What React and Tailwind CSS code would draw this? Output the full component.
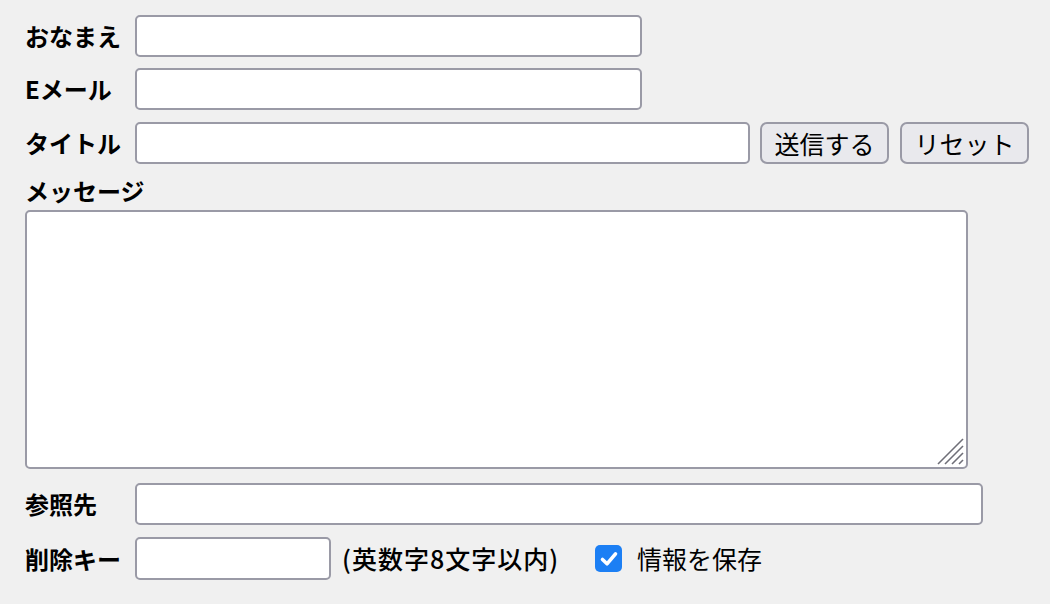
import React from "react";

const inputCls =
  "h-[42px] bg-white border-2 border-[#9a9aa6] rounded-[5px] outline-none px-2 text-[24px]";
const btnCls =
  "h-[42px] w-[129px] bg-[#e9e9ed] border-2 border-[#9a9aa6] rounded-[7px] text-[25px] text-black leading-none flex items-center justify-center";
const labelCls = "w-[110px] shrink-0 text-[24px] font-bold text-black leading-none";

export default function App() {
  return (
    <div className="min-h-[604px] w-[1050px] bg-[#f0f0f0] font-['Noto_Sans_CJK_JP','Noto_Sans_CJK_SC',sans-serif] text-black pl-[25px] pt-[15px]">
      <div className="flex items-center h-[42px]">
        <span className={labelCls}>おなまえ</span>
        <input className={inputCls + " w-[507px]"} />
      </div>
      <div className="flex items-center h-[42px] mt-[11px]">
        <span className={labelCls}>Eメール</span>
        <input className={inputCls + " w-[507px]"} />
      </div>
      <div className="flex items-center h-[42px] mt-[12px]">
        <span className={labelCls}>タイトル</span>
        <input className={inputCls + " w-[615px]"} />
        <button className={btnCls + " ml-[10px]"}>送信する</button>
        <button className={btnCls + " ml-[11px]"}>リセット</button>
      </div>
      <div className="h-[30px] mt-[12px] flex items-center text-[24px] font-bold leading-none">
        メッセージ
      </div>
      <div className="relative mt-[4px] w-[943px] h-[259px]">
        <textarea className="block w-full h-full resize-none bg-white border-2 border-[#9a9aa6] rounded-[5px] outline-none p-2 text-[24px]" />
        <svg
          className="absolute right-[4px] bottom-[4px] pointer-events-none"
          width="28"
          height="28"
          viewBox="0 0 28 28"
        >
          <g stroke="#6f6f78" strokeWidth="1.6" strokeLinecap="butt">
            <line x1="2" y1="27" x2="27" y2="2" />
            <line x1="9" y1="27" x2="27" y2="9" />
            <line x1="16" y1="27" x2="27" y2="16" />
            <line x1="23" y1="27" x2="27" y2="23" />
          </g>
        </svg>
      </div>
      <div className="flex items-center h-[42px] mt-[14px]">
        <span className={labelCls}>参照先</span>
        <input className={inputCls + " w-[848px]"} />
      </div>
      <div className="flex items-center h-[43px] mt-[12px]">
        <span className={labelCls}>削除キー</span>
        <input className={inputCls + " w-[196px] h-[43px]"} />
        <span className="ml-[11px] text-[25px] font-medium leading-none tracking-[1px]">(英数字8文字以内)</span>
        <span className="ml-[36px] w-[27px] h-[27px] rounded-[5px] bg-[#1c7ff4] flex items-center justify-center">
          <svg width="22" height="22" viewBox="0 0 22 22">
            <path
              d="M4.5 11.5 L9 15.8 L17.5 5.8"
              fill="none"
              stroke="white"
              strokeWidth="3.6"
              strokeLinecap="round"
              strokeLinejoin="round"
            />
          </svg>
        </span>
        <span className="ml-[15px] text-[25px] leading-none">情報を保存</span>
      </div>
    </div>
  );
}
